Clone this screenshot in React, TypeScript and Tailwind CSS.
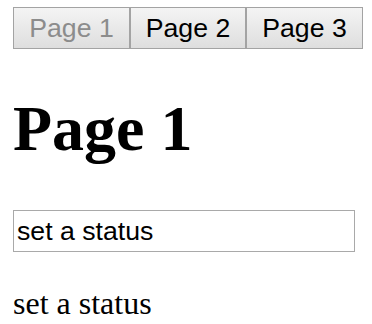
import { useState } from "react";

const pages = ["Page 1", "Page 2", "Page 3"];

function PageButton({
  label,
  active,
  onClick,
  width,
}: {
  label: string;
  active: boolean;
  onClick: () => void;
  width: string;
}) {
  return (
    <button
      type="button"
      disabled={active}
      onClick={onClick}
      className={`${width} flex h-[42px] items-center justify-center border border-[#a3a3a3] bg-gradient-to-b from-[#f4f4f4] to-[#dedede] font-['Liberation_Sans',Arial,sans-serif] text-[26.67px] leading-none ${
        active ? "text-[#8c8c8c]" : "text-black"
      }`}
    >
      {label}
    </button>
  );
}

export default function App() {
  const [page, setPage] = useState(0);
  const [status, setStatus] = useState("set a status");

  const widths = ["w-[117px]", "w-[116px]", "w-[117px]"];

  return (
    <div className="min-h-screen bg-white pl-[13px] pt-[7px] text-black">
      <nav className="flex">
        {pages.map((label, i) => (
          <PageButton
            key={label}
            label={label}
            active={i === page}
            onClick={() => setPage(i)}
            width={widths[i]}
          />
        ))}
      </nav>

      <h1 className="mt-[48px] font-['Liberation_Serif','Times_New_Roman',serif] text-[64px] font-bold leading-[64px]">
        {pages[page]}
      </h1>

      <input
        value={status}
        onChange={(e) => setStatus(e.target.value)}
        className="mt-[49px] block h-[42px] w-[342px] border border-[#a9a9a9] px-[3px] font-['Liberation_Sans',Arial,sans-serif] text-[26.67px] text-black outline-none"
      />

      <p className="mt-[35px] font-['Liberation_Serif','Times_New_Roman',serif] text-[32px] leading-[32px]">
        {status}
      </p>
    </div>
  );
}
